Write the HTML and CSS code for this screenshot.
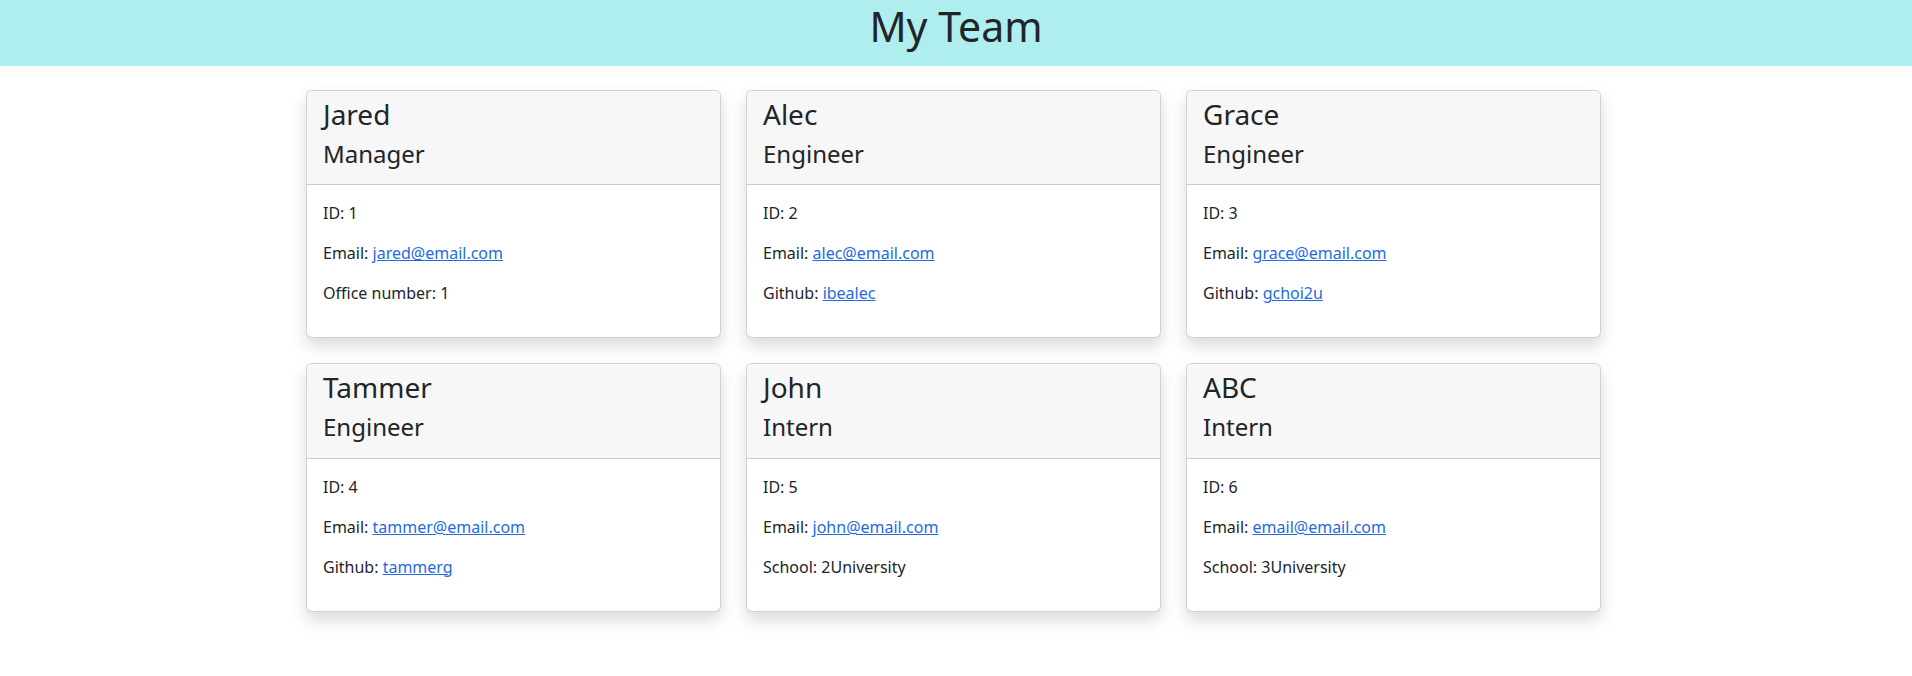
FILE: index.html
```html
<!DOCTYPE html>
<html lang="en">
<head>
<meta charset="utf-8">
<title>My Team</title>
<link rel="stylesheet" href="styles.css">
</head>
<body>
<header class="banner">
  <h1 class="banner-title">My Team</h1>
</header>
<main class="team-wrap">
  <div class="team">
    <div class="card">
      <div class="card-header">
        <h3 class="card-name">Jared</h3>
        <h4 class="card-role">Manager</h4>
      </div>
      <div class="card-body">
        <p>ID: 1</p>
        <p>Email: <a href="mailto:jared@email.com">jared@email.com</a></p>
        <p>Office number: 1</p>
      </div>
    </div>
    <div class="card">
      <div class="card-header">
        <h3 class="card-name">Alec</h3>
        <h4 class="card-role">Engineer</h4>
      </div>
      <div class="card-body">
        <p>ID: 2</p>
        <p>Email: <a href="mailto:alec@email.com">alec@email.com</a></p>
        <p>Github: <a href="#">ibealec</a></p>
      </div>
    </div>
    <div class="card">
      <div class="card-header">
        <h3 class="card-name">Grace</h3>
        <h4 class="card-role">Engineer</h4>
      </div>
      <div class="card-body">
        <p>ID: 3</p>
        <p>Email: <a href="mailto:grace@email.com">grace@email.com</a></p>
        <p>Github: <a href="#">gchoi2u</a></p>
      </div>
    </div>
    <div class="card">
      <div class="card-header">
        <h3 class="card-name">Tammer</h3>
        <h4 class="card-role">Engineer</h4>
      </div>
      <div class="card-body">
        <p>ID: 4</p>
        <p>Email: <a href="mailto:tammer@email.com">tammer@email.com</a></p>
        <p>Github: <a href="#">tammerg</a></p>
      </div>
    </div>
    <div class="card">
      <div class="card-header">
        <h3 class="card-name">John</h3>
        <h4 class="card-role">Intern</h4>
      </div>
      <div class="card-body">
        <p>ID: 5</p>
        <p>Email: <a href="mailto:john@email.com">john@email.com</a></p>
        <p>School: 2University</p>
      </div>
    </div>
    <div class="card">
      <div class="card-header">
        <h3 class="card-name">ABC</h3>
        <h4 class="card-role">Intern</h4>
      </div>
      <div class="card-body">
        <p>ID: 6</p>
        <p>Email: <a href="mailto:email@email.com">email@email.com</a></p>
        <p>School: 3University</p>
      </div>
    </div>
  </div>
</main>
</body>
</html>
```
FILE: styles.css
```css
* { box-sizing: border-box; }

html, body {
  min-height: 100%;
}

body {
  margin: 0;
  font-family: "Noto Sans", "Open Sans", sans-serif;
  font-size: 16px;
  line-height: 1.5;
  color: #212529;
  background: #fff;
}

.banner {
  background: #afeeee;
  height: 66px;
  padding-top: 2px;
  text-align: center;
}

.banner-title {
  margin: 0;
  font-size: 41px;
  font-weight: 400;
  line-height: 48px;
}

.team-wrap {
  display: flex;
  justify-content: center;
  padding: 24px 5px 48px 0;
}

.team {
  display: grid;
  grid-template-columns: repeat(3, 415px);
  gap: 25px;
}

.card {
  background: #fff;
  border: 1px solid rgba(0, 0, 0, 0.175);
  border-radius: 6px;
  box-shadow: 0 8px 16px rgba(0, 0, 0, 0.15);
}

.card-header {
  background: #f7f7f7;
  border-bottom: 1px solid rgba(0, 0, 0, 0.175);
  border-radius: 5px 5px 0 0;
  padding: 7px 16px 8px;
}

.card-name {
  margin: 0 0 8px;
  font-size: 28px;
  font-weight: 400;
  line-height: 1.2;
}

.card-role {
  margin: 0 0 8px;
  font-size: 24px;
  font-weight: 400;
  line-height: 1.2;
}

.card-body {
  padding: 16px;
}

.card-body p {
  margin: 0 0 16px;
}

.card-body a {
  color: #1f6be0;
  text-decoration: underline;
}
```
